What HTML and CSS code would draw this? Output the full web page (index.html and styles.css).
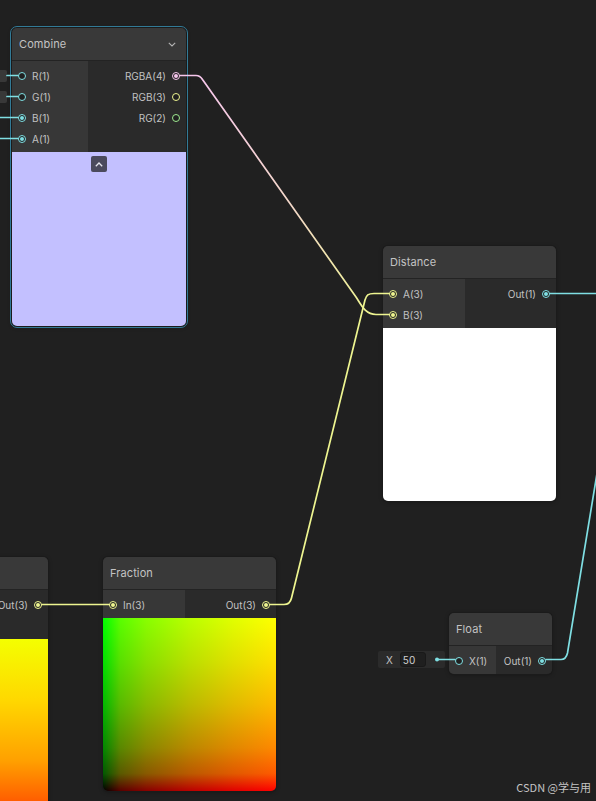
FILE: index.html
```html
<!DOCTYPE html>
<html>
<head>
<meta charset="utf-8">
<link rel="stylesheet" href="styles.css">
</head>
<body>
<div class="canvas">

  <!-- inline value fields -->
  <div class="field-stub f-r"></div>
  <div class="field-stub f-g"></div>
  <div class="field f-float">
    <span class="field-label">X</span>
    <span class="field-input">50</span>
  </div>

  <!-- Combine -->
  <div class="node n-combine selected">
    <div class="node-header">
      <span class="title">Combine</span>
      <svg class="chev" width="8" height="5" viewBox="0 0 8 5"><polyline points="0.8,0.8 4,4 7.2,0.8" fill="none" stroke="#b4b4b4" stroke-width="1.1"/></svg>
    </div>
    <div class="ports">
      <div class="inputs w-combine">
        <div class="port"><span class="dot cyan"></span><span class="label">R(1)</span></div>
        <div class="port"><span class="dot cyan"></span><span class="label">G(1)</span></div>
        <div class="port"><span class="dot cyan on"></span><span class="label">B(1)</span></div>
        <div class="port"><span class="dot cyan on"></span><span class="label">A(1)</span></div>
      </div>
      <div class="outputs">
        <div class="port out"><span class="label">RGBA(4)</span><span class="dot pink on"></span></div>
        <div class="port out"><span class="label">RGB(3)</span><span class="dot yellow"></span></div>
        <div class="port out"><span class="label">RG(2)</span><span class="dot green"></span></div>
      </div>
    </div>
    <div class="preview p-lavender">
      <span class="collapse"><svg width="8" height="5" viewBox="0 0 8 5"><polyline points="0.8,4.2 4,1 7.2,4.2" fill="none" stroke="#e6e6ee" stroke-width="1.3"/></svg></span>
    </div>
  </div>

  <!-- Distance -->
  <div class="node n-distance">
    <div class="node-header"><span class="title">Distance</span></div>
    <div class="ports">
      <div class="inputs w-distance">
        <div class="port"><span class="dot yellow on"></span><span class="label">A(3)</span></div>
        <div class="port"><span class="dot yellow on"></span><span class="label">B(3)</span></div>
      </div>
      <div class="outputs">
        <div class="port out"><span class="label">Out(1)</span><span class="dot cyan on"></span></div>
      </div>
    </div>
    <div class="preview p-white"></div>
  </div>

  <!-- partial node at left -->
  <div class="node n-left">
    <div class="node-header"><span class="title"></span></div>
    <div class="ports tall">
      <div class="inputs w-distance"></div>
      <div class="outputs">
        <div class="port out"><span class="label">Out(3)</span><span class="dot yellow on"></span></div>
      </div>
    </div>
    <div class="preview p-warm"></div>
  </div>

  <!-- Fraction -->
  <div class="node n-fraction">
    <div class="node-header"><span class="title">Fraction</span></div>
    <div class="ports">
      <div class="inputs w-distance">
        <div class="port"><span class="dot yellow on"></span><span class="label">In(3)</span></div>
      </div>
      <div class="outputs">
        <div class="port out"><span class="label">Out(3)</span><span class="dot yellow on"></span></div>
      </div>
    </div>
    <div class="preview p-fraction"></div>
  </div>

  <!-- Float -->
  <div class="node n-float">
    <div class="node-header"><span class="title">Float</span></div>
    <div class="ports">
      <div class="inputs w-float">
        <div class="port"><span class="dot cyan"></span><span class="label">X(1)</span></div>
      </div>
      <div class="outputs">
        <div class="port out"><span class="label">Out(1)</span><span class="dot cyan on"></span></div>
      </div>
    </div>
  </div>

  <svg class="wires" width="596" height="801" viewBox="0 0 596 801">
    <defs>
      <linearGradient id="pk" gradientUnits="userSpaceOnUse" x1="196" y1="75" x2="376" y2="314">
        <stop offset="0" stop-color="#f6c6ec"/>
        <stop offset="0.55" stop-color="#f3d8c8"/>
        <stop offset="1" stop-color="#eef590"/>
      </linearGradient>
    </defs>
    <g fill="none" stroke-width="1.7" stroke-linecap="round">
      <path class="w-cyan" d="M7,75.5 H18"/>
      <path class="w-cyan" d="M7,96.5 H18"/>
      <path class="w-cyan" d="M0,117.5 H18"/>
      <path class="w-cyan" d="M0,138.5 H18"/>
      <path stroke="url(#pk)" d="M180,75.5 H196 Q200,75.5 202.5,79.5 L356,297 C361,304.5 365,314.5 376,314.5 H389"/>
      <path class="w-yellow" d="M270,604.5 H284 Q290,604.5 291.5,598 L365,300 C366.5,295 368,293.5 374,293.5 H389"/>
      <path class="w-yellow" d="M42,604.5 H109"/>
      <path class="w-cyan" d="M550,293.5 H600"/>
      <path class="w-cyan" d="M546,659.5 H561 Q566,659.5 567.5,653 L600.5,452"/>
      <path class="w-cyan" d="M437,659.5 H455"/>
    </g>
    <circle cx="437" cy="659.5" r="2" fill="#7fdfe3"/>
  </svg>

  <div class="watermark">CSDN @学与用</div>
</div>
</body>
</html>
```
FILE: styles.css
```css
html, body {
  margin: 0;
  padding: 0;
  background: #202020;
}

body {
  width: 596px;
  height: 801px;
  overflow: hidden;
  font-family: Inter, "Noto Sans", sans-serif;
}

.canvas {
  position: relative;
  width: 596px;
  height: 801px;
  overflow: hidden;
  background: #202020;
}

/* ---------- nodes ---------- */
.node {
  position: absolute;
  display: flex;
  flex-direction: column;
  background: #2a2a2a;
  border-radius: 5px;
  overflow: hidden;
  box-shadow: 0 0 0 1px #1b1b1b, 0 1px 4px rgba(0, 0, 0, 0.35);
}

.node.selected {
  outline: 1px solid #327a96;
  outline-offset: 1px;
}

.n-combine  { left: 12px;   top: 28px;  width: 174px; }
.n-distance { left: 383px;  top: 246px; width: 173px; }
.n-fraction { left: 103px;  top: 557px; width: 173px; }
.n-left     { left: -125px; top: 557px; width: 173px; }
.n-float    { left: 449px;  top: 613px; width: 103px; }

.node-header {
  height: 32px;
  flex: none;
  display: flex;
  align-items: center;
  justify-content: space-between;
  padding: 0 7px;
  background: #393939;
  border-bottom: 1px solid #232323;
}

.title {
  font-size: 11px;
  color: #c3c3c3;
  letter-spacing: 0.1px;
}

.chev {
  margin-right: 3px;
  margin-top: 1px;
}

/* ---------- ports ---------- */
.ports {
  display: flex;
  background: #2a2a2a;
}

.ports.tall {
  height: 49px;
}

.inputs {
  flex: none;
  background: #373737;
  padding: 4px 0 3px;
}

.w-combine  { width: 76px; }
.w-distance { width: 82px; }
.w-float    { width: 47px; }

.outputs {
  flex: 1;
  padding: 4px 0 3px;
}

.port {
  height: 21px;
  display: flex;
  align-items: center;
  gap: 6px;
  padding: 0 6px;
}

.port.out {
  justify-content: flex-end;
}

.label {
  font-size: 10px;
  color: #c2c2c2;
  white-space: nowrap;
}

.dot {
  position: relative;
  flex: none;
  width: 8px;
  height: 8px;
  box-sizing: border-box;
  border: 1px solid currentColor;
  border-radius: 50%;
  background: #202020;
}

.dot.on::after {
  content: "";
  position: absolute;
  left: 1px;
  top: 1px;
  width: 4px;
  height: 4px;
  border-radius: 50%;
  background: currentColor;
}

.cyan   { color: #7fdfe3; }
.pink   { color: #f6c6ec; }
.yellow { color: #eef590; }
.green  { color: #9eea90; }

/* ---------- previews ---------- */
.preview {
  position: relative;
  flex: none;
  height: 174px;
  display: flex;
  justify-content: center;
  align-items: flex-start;
}

.n-distance .preview,
.n-fraction .preview {
  height: 173px;
}

.p-lavender { background: #c3c0ff; }
.p-white    { background: #ffffff; }

.p-fraction {
  background-image:
    linear-gradient(to right, #000000 0%, #590000 10%, #880000 25%, #ba0000 50%, #e00000 75%, #ff0000 100%),
    linear-gradient(to bottom, #00ff00 0%, #00e000 25%, #00ba00 50%, #008800 75%, #005900 90%, #000000 100%);
  background-blend-mode: screen;
}

.p-warm {
  background-image:
    linear-gradient(to bottom, #f4ff00 0%, #ffd800 35%, #ffa000 70%, #ff4a00 100%);
}

.collapse {
  margin-top: 4px;
  width: 16px;
  height: 16px;
  border-radius: 2px;
  background: #4b4a5d;
  display: flex;
  align-items: center;
  justify-content: center;
}

/* ---------- inline fields ---------- */
.field-stub {
  position: absolute;
  left: -60px;
  width: 67px;
  height: 12px;
  background: #383838;
  border-radius: 2px;
}

.f-r { top: 69.5px; }
.f-g { top: 90.5px; }

.field {
  position: absolute;
  display: flex;
  align-items: center;
  gap: 7px;
  box-sizing: border-box;
  padding: 0 8px;
  background: #2b2b2b;
  border-radius: 2px;
}

.f-float {
  left: 378px;
  top: 651px;
  width: 67px;
  height: 17px;
}

.field-label {
  font-size: 10px;
  color: #c2c2c2;
}

.field-input {
  box-sizing: border-box;
  width: 26px;
  height: 15px;
  padding-left: 2px;
  line-height: 14px;
  font-size: 10px;
  color: #d0d0d0;
  background: #1f1f1f;
  border: 1px solid #191919;
  border-radius: 3px;
}

/* ---------- wires ---------- */
.wires {
  position: absolute;
  left: 0;
  top: 0;
  pointer-events: none;
}

.w-cyan   { stroke: #7fdfe3; }
.w-yellow { stroke: #eef590; }

/* ---------- watermark ---------- */
.watermark {
  position: absolute;
  right: 5px;
  top: 779px;
  font-family: "Noto Sans CJK SC", "Noto Sans", sans-serif;
  font-size: 11px;
  line-height: 16px;
  color: #c4c4c4;
}
```
